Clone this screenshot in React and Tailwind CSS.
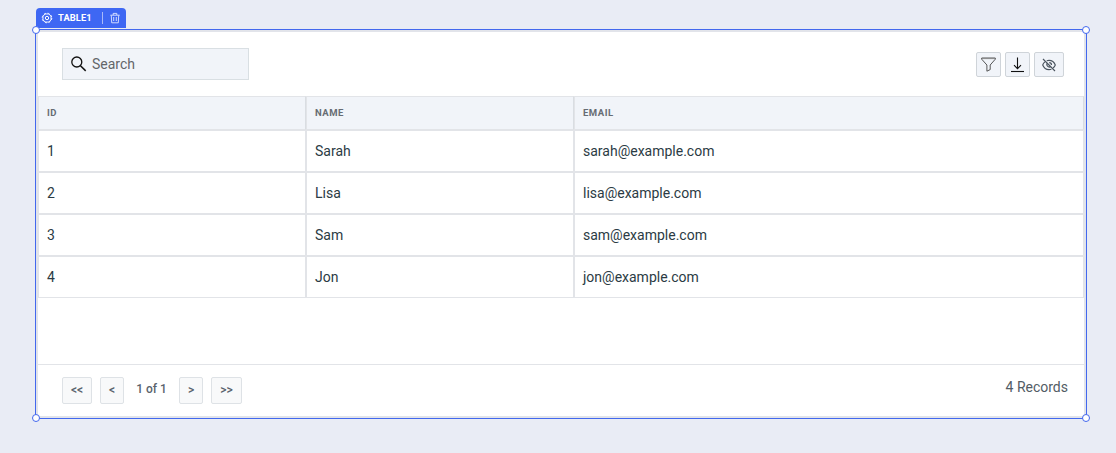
import React from "react";

const rows = [
  ["1", "Sarah", "sarah@example.com"],
  ["2", "Lisa", "lisa@example.com"],
  ["3", "Sam", "sam@example.com"],
  ["4", "Jon", "jon@example.com"],
];

function GearIcon() {
  return (
    <svg width="12" height="12" viewBox="0 0 12 12" fill="none" stroke="#fff">
      <circle cx="6" cy="6" r="4.1" strokeWidth="0.9" />
      <circle cx="6" cy="6" r="4.8" strokeWidth="0.9" strokeDasharray="2 1.77" />
      <circle cx="6" cy="6" r="1.7" strokeWidth="1" />
    </svg>
  );
}

function TrashIcon() {
  return (
    <svg width="12" height="12" viewBox="0 0 12 12" fill="none" stroke="#dfe5ff" strokeWidth="0.9">
      <path d="M1.3 3.2H10.7M4.2 3V1.4H7.8V3M2.3 3.4 2.7 10.8H9.3L9.7 3.4M4.7 5V9M7.3 5V9" />
    </svg>
  );
}

function SearchIcon() {
  return (
    <svg width="16" height="16" viewBox="0 0 16 16" fill="none" stroke="#111" strokeWidth="1.3">
      <circle cx="5.8" cy="6" r="5" />
      <path d="M9.5 9.7 14.7 14.9" strokeWidth="1.5" />
    </svg>
  );
}

function FilterIcon() {
  return (
    <svg width="15" height="15" viewBox="0 0 15 15" fill="none" stroke="#444" strokeWidth="0.9">
      <path d="M.7 1H14.3V2.2L9.2 8V12.6L5.9 14.2V8L.7 2.2Z" />
      <path d="M1 1.6H14" stroke="#888" />
    </svg>
  );
}

function DownloadIcon() {
  return (
    <svg width="13" height="16" viewBox="0 0 13 16" fill="none" stroke="#111" strokeWidth="1.1">
      <path d="M6.5.5V11.5M3 8.2 6.5 11.7 10 8.2" />
      <path d="M0 14.5H13" />
    </svg>
  );
}

function HiddenIcon() {
  return (
    <svg width="14" height="14" viewBox="0 0 14 14" fill="none" stroke="#4b555f" strokeWidth="1.15">
      <path d="M4.7 2.7C5.4 2.4 6.2 2.3 7 2.3C9.8 2.3 12.2 4.1 13.3 7C12.8 8.2 12 9.2 11.1 10M9.4 11.2C8.7 11.5 7.9 11.6 7 11.6C4.2 11.6 1.8 9.8.7 7C1.2 5.7 2 4.7 2.9 3.9" />
      <path d="M1 1 13 13M4.9 5.4C4.2 7.5 6 9.6 8.3 9M7.2 4.6C8.6 4.6 9.5 5.6 9.5 6.9" />
    </svg>
  );
}

function Handle({ className }) {
  return <span className={`absolute size-2 rounded-full border border-[#4368ee] bg-white ${className}`} />;
}

function PageButton({ children, className }) {
  return (
    <button className={`flex h-[27px] items-center justify-center rounded-[2px] border border-[#dee2e6] bg-[#f8f9fa] pb-0.5 text-[12px] font-medium text-[#5a636d] ${className}`}>
      {children}
    </button>
  );
}

function ToolButton({ children, className }) {
  return (
    <button className={`flex h-[25px] items-center justify-center rounded-[2px] border border-[#cfd4d9] bg-[#f1f4f9] ${className}`}>
      {children}
    </button>
  );
}

function Cell({ children, className }) {
  return <div className={`flex items-center border border-[#e2e4e8] px-2 ${className ?? ""}`}>{children}</div>;
}

export default function App() {
  return (
    <main className="flex h-[453px] w-[1116px] flex-col items-start bg-[#e9ecf5] pt-2 pl-[35px] font-['Roboto',sans-serif] antialiased">
      <div className="mb-px ml-px flex h-5 w-[90px] items-center rounded-t-[4px] bg-[#3e67f3] pl-[5px] text-white">
        <GearIcon />
        <span className="ml-[5px] w-[44px] text-[9.3px] font-bold tracking-[0.1px]">TABLE1</span>
        <span className="mr-[6px] h-3 w-px bg-[#a9b9f8]" />
        <TrashIcon />
      </div>
      <div className="relative h-[390px] w-[1052px] border border-[#4368ee]">
        <section className="flex h-full flex-col border-2 border-[#e2e4ea] bg-white">
          <header className="flex h-16 items-center justify-between pr-5 pl-6">
            <div className="flex h-8 w-[187px] items-center border border-[#d9dfe3] bg-[#f1f4f9] pl-2">
              <SearchIcon />
              <span className="ml-[5px] text-[14px] text-[#636669]">Search</span>
            </div>
            <div className="flex gap-1 pt-px">
              <ToolButton className="w-[25px]"><FilterIcon /></ToolButton>
              <ToolButton className="w-[25px]"><DownloadIcon /></ToolButton>
              <ToolButton className="w-[30px]"><HiddenIcon /></ToolButton>
            </div>
          </header>
          <div className="grid h-[34px] shrink-0 grid-cols-[268px_268px_510px] bg-[#f1f4f9] text-[9.5px] leading-[14px] font-bold tracking-[0.5px] text-[#666c73]">
            <Cell className="border-r-[#d9dde2]">ID</Cell>
            <Cell className="border-r-[#d9dde2]">NAME</Cell>
            <Cell className="border-r-[#d9dde2]">EMAIL</Cell>
          </div>
          {rows.map((row) => (
            <div key={row[0]} className="grid h-[42px] shrink-0 grid-cols-[268px_268px_510px] text-[14px] text-[#2b3b44]">
              {row.map((value) => <Cell key={value}>{value}</Cell>)}
            </div>
          ))}
          <footer className="mt-auto flex h-[52px] shrink-0 items-center border-t border-[#e2e4e8] pr-4 pl-6">
            <PageButton className="w-[30px]">&lt;&lt;</PageButton>
            <PageButton className="ml-2 w-6">&lt;</PageButton>
            <span className="w-[55px] pb-[3px] text-center text-[12px] font-medium text-[#5a636d]">1 of 1</span>
            <PageButton className="w-6">&gt;</PageButton>
            <PageButton className="ml-2 w-[31px]">&gt;&gt;</PageButton>
            <span className="ml-auto pb-[7px] text-[14px] text-[#525c65]">4 Records</span>
          </footer>
        </section>
        <Handle className="-top-1 -left-1" />
        <Handle className="-top-1 -right-1" />
        <Handle className="-bottom-1 -left-1" />
        <Handle className="-right-1 -bottom-1" />
      </div>
    </main>
  );
}
